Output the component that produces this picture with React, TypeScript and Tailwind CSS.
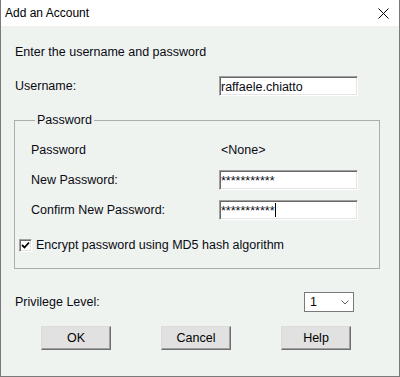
import { useState } from "react";

const sunken =
  "bg-white border border-t-[#a0a0a0] border-l-[#a0a0a0] border-r-white border-b-white shadow-[inset_1px_1px_0_#696969,inset_-1px_-1px_0_#e3e3e3]";

const Field = ({ value, caret }: { value: string; caret?: boolean }) => (
  <div className={`w-[139px] h-[20px] flex items-center pl-[1px] ${sunken}`}>
    <span className="leading-[14px] pt-[2px]">{value}</span>
    {caret && <span className="w-px h-[14px] bg-black"></span>}
  </div>
);

const Btn = ({ label }: { label: string }) => (
  <button className="w-[70px] h-[24px] bg-[#e1e1e1] border border-t-[#dcdcdc] border-l-[#dcdcdc] border-r-[#6f6f6f] border-b-[#6f6f6f] shadow-[inset_-1px_-1px_0_#a0a0a0] flex items-center justify-center text-black">
    {label}
  </button>
);

export default function App() {
  const [encrypt, setEncrypt] = useState(true);

  return (
    <div className="w-[400px] h-[377px] bg-[#eff3ef] border-x border-b border-[#7a7a7a] text-[12.5px] text-[#0a0a14] font-['Liberation_Sans',Arial,sans-serif] select-none">
      <div className="h-[26px] bg-white flex items-center justify-between">
        <span className="ml-[4px] text-[12px] text-black">Add an Account</span>
        <svg width="11" height="11" viewBox="0 0 11 11" className="mr-[10px]">
          <path d="M0.5 0.5L10.5 10.5M10.5 0.5L0.5 10.5" stroke="#000" strokeWidth="1" />
        </svg>
      </div>

      <div className="pl-[14px] flex flex-col">
        <div className="mt-[19px] h-[15px] leading-[15px]">Enter the username and password</div>

        <div className="mt-[16px] h-[20px] flex items-center">
          <div className="w-[204px]">Username:</div>
          <Field value="raffaele.chiatto" />
        </div>

        <fieldset className="mt-[17px] -ml-px w-[366px] border border-[#adadad] pl-[16px] pb-[13px]">
          <legend className="ml-[4px] px-[2px] leading-[14px]">Password</legend>

          <div className="mt-[13px] h-[20px] flex items-center">
            <div className="w-[188px]">Password</div>
            <div className="pl-[2px]">&lt;None&gt;</div>
          </div>

          <div className="mt-[10px] h-[20px] flex items-center">
            <div className="w-[188px]">New Password:</div>
            <Field value="***********" />
          </div>

          <div className="mt-[10px] h-[20px] flex items-center">
            <div className="w-[188px]">Confirm New Password:</div>
            <Field value="***********" caret />
          </div>

          <div
            className="mt-[15px] h-[20px] flex items-center -ml-[12px] cursor-default"
            onClick={() => setEncrypt(!encrypt)}
          >
            <div className={`w-[13px] h-[13px] flex items-center justify-center ${sunken}`}>
              {encrypt && (
                <svg width="9" height="9" viewBox="0 0 9 9">
                  <path d="M1 4L3.5 6.5L8 1.5" fill="none" stroke="#000" strokeWidth="1.8" />
                </svg>
              )}
            </div>
            <span className="ml-[4px]">Encrypt password using MD5 hash algorithm</span>
          </div>
        </fieldset>

        <div className="mt-[23px] h-[20px] flex items-center">
          <div className="w-[289px]">Privilege Level:</div>
          <div className="w-[50px] h-[20px] bg-white border border-[#7a7a7a] flex items-center justify-between pl-[5px] pr-[4px]">
            <span>1</span>
            <svg width="8" height="5" viewBox="0 0 8 5">
              <path d="M0.5 0.5L4 4L7.5 0.5" fill="none" stroke="#606060" strokeWidth="1" />
            </svg>
          </div>
        </div>

        <div className="mt-[14px] ml-[26px] flex gap-[50px]">
          <Btn label="OK" />
          <Btn label="Cancel" />
          <Btn label="Help" />
        </div>
      </div>
    </div>
  );
}
